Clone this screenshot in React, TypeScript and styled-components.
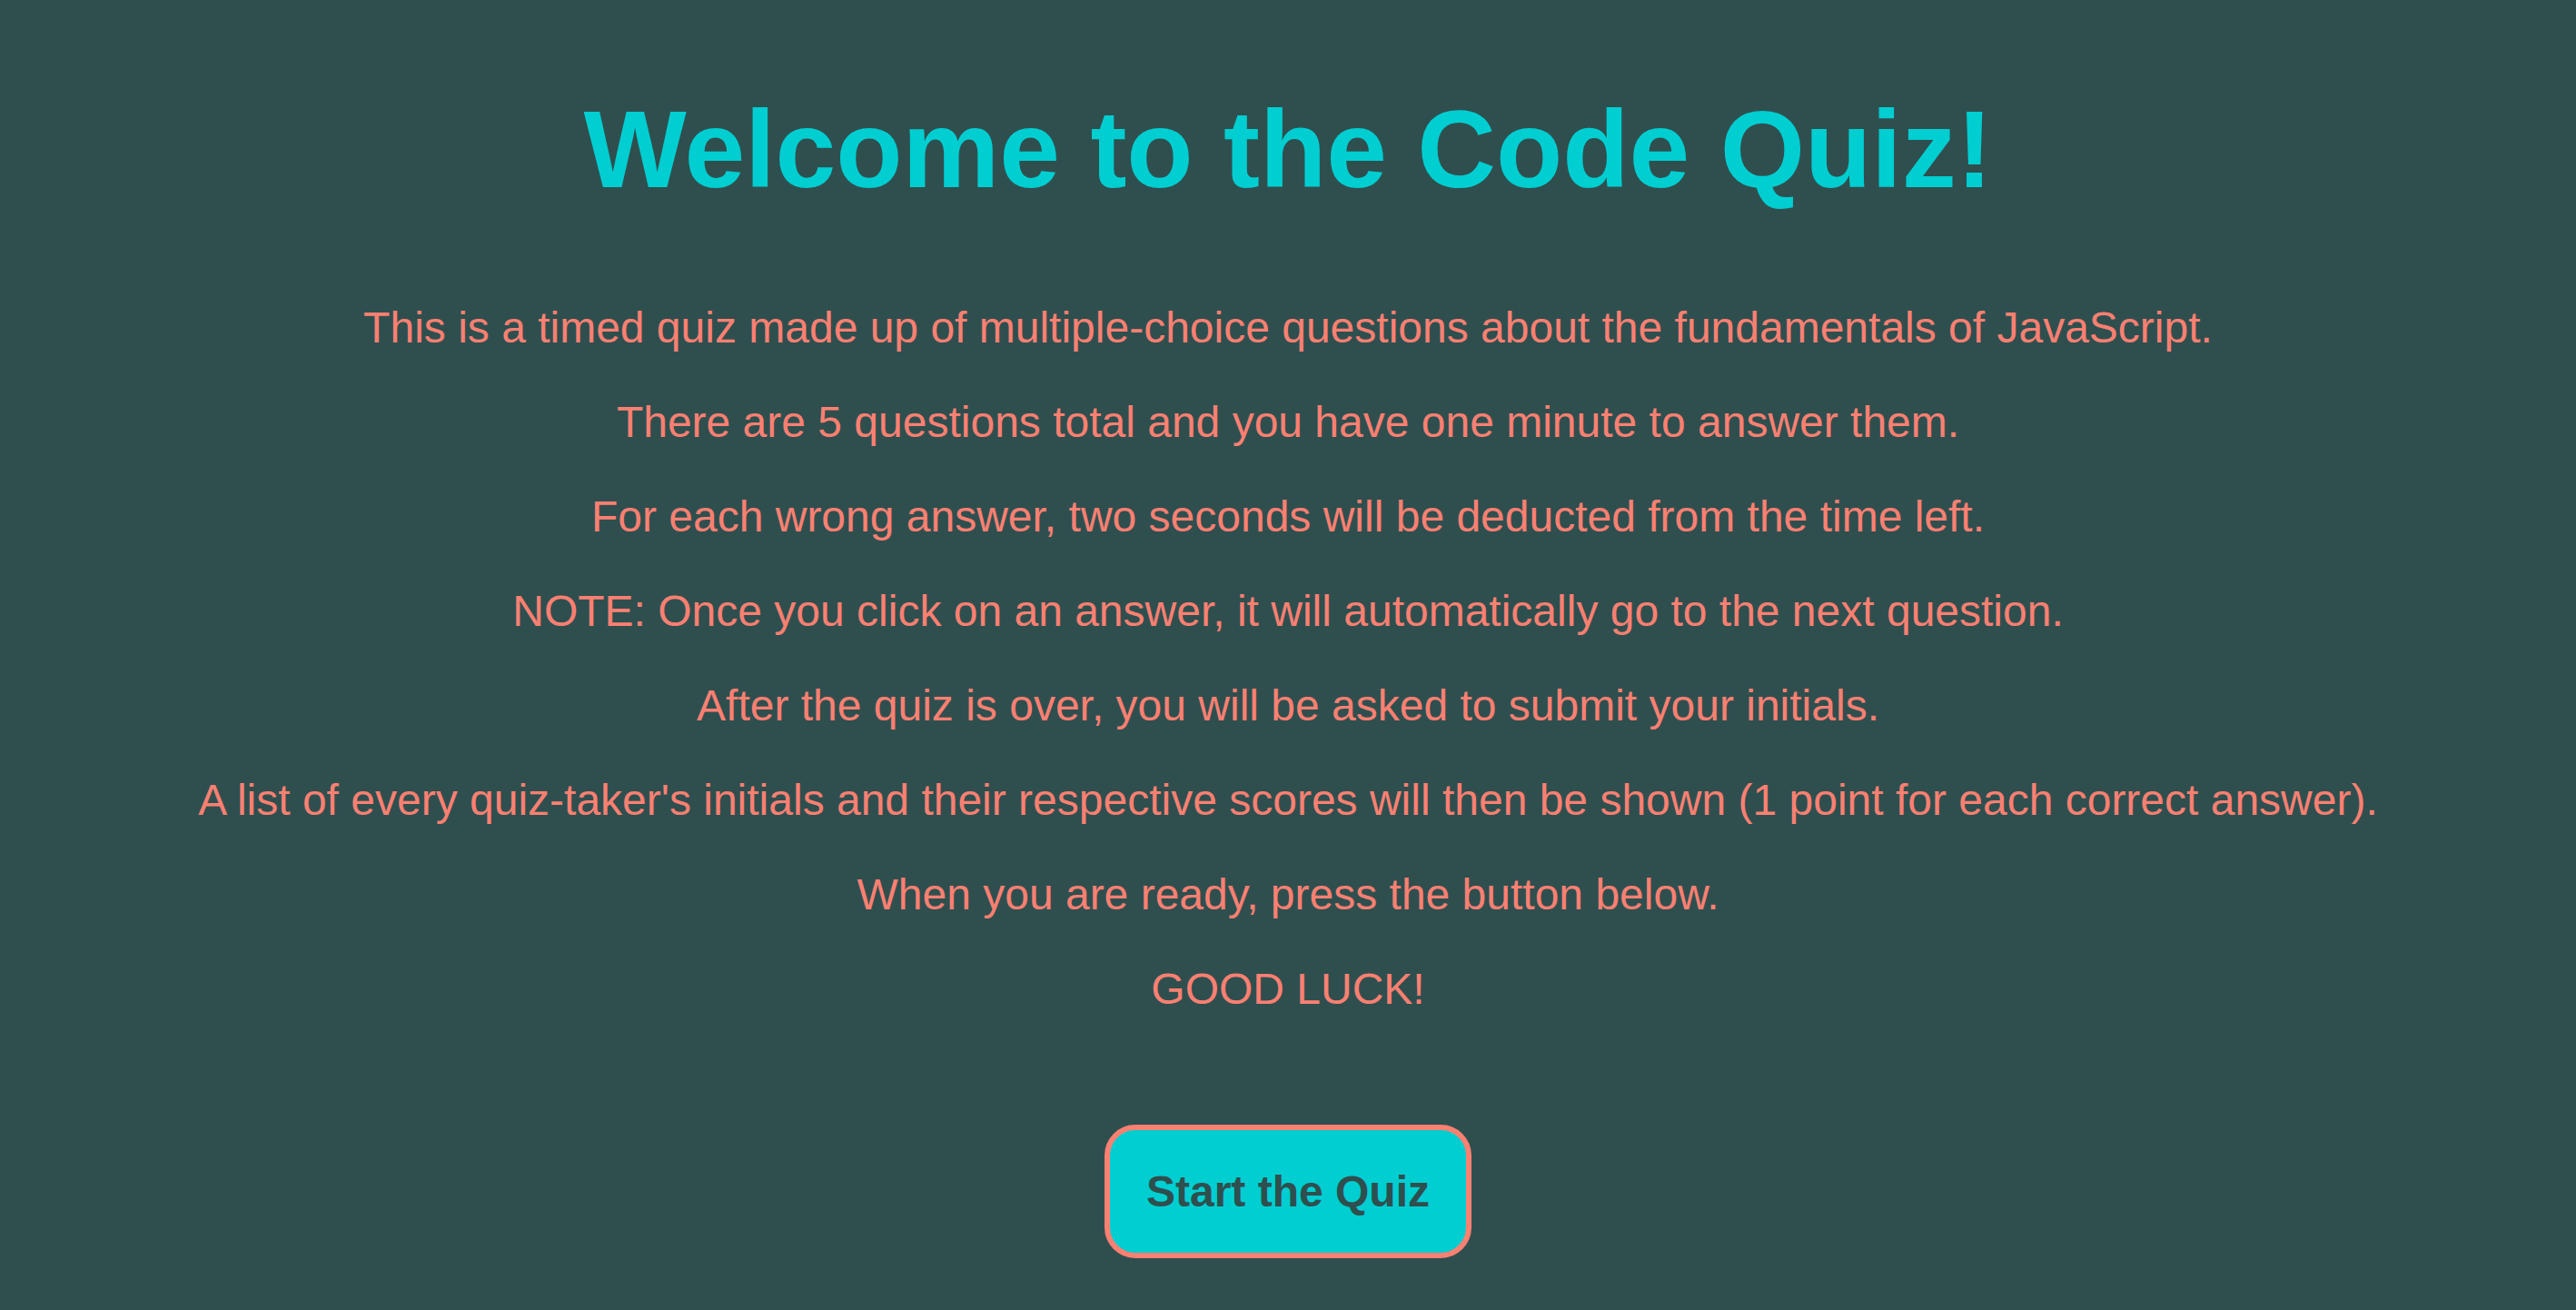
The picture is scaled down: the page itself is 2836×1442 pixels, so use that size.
import React from "react";
import styled, { createGlobalStyle } from "styled-components";

const GlobalStyle = createGlobalStyle`
  html, body {
    margin: 0;
    padding: 0;
    background: #2f4f4f;
  }
  body {
    font-family: "Liberation Sans", Arial, Helvetica, sans-serif;
    min-height: 100vh;
  }
`;

const Page = styled.main`
  display: flex;
  flex-direction: column;
  align-items: center;
  padding: 95px 0 40px;
  background: #2f4f4f;
  min-height: 100vh;
  box-sizing: border-box;
`;

const Title = styled.h1`
  margin: 0 0 100px;
  font-size: 120px;
  line-height: 138px;
  font-weight: 700;
  color: #00ced1;
  text-align: center;
`;

const Intro = styled.section`
  display: flex;
  flex-direction: column;
  align-items: center;
  gap: 48px;
`;

const Line = styled.p`
  margin: 0;
  font-size: 48px;
  line-height: 56px;
  color: #fa8072;
  text-align: center;
`;

const StartButton = styled.button`
  margin-top: 121px;
  padding: 40px;
  border: 6px solid #fa8072;
  border-radius: 34px;
  background: #00ced1;
  color: #2f4f4f;
  font-family: "Liberation Sans", Arial, Helvetica, sans-serif;
  font-size: 48px;
  line-height: 55px;
  font-weight: 700;
  cursor: pointer;
`;

const lines = [
  "This is a timed quiz made up of multiple-choice questions about the fundamentals of JavaScript.",
  "There are 5 questions total and you have one minute to answer them.",
  "For each wrong answer, two seconds will be deducted from the time left.",
  "NOTE: Once you click on an answer, it will automatically go to the next question.",
  "After the quiz is over, you will be asked to submit your initials.",
  "A list of every quiz-taker's initials and their respective scores will then be shown (1 point for each correct answer).",
  "When you are ready, press the button below.",
  "GOOD LUCK!",
];

export default function App() {
  return (
    <>
      <GlobalStyle />
      <Page>
        <Title>Welcome to the Code Quiz!</Title>
        <Intro>
          {lines.map((l) => (
            <Line key={l}>{l}</Line>
          ))}
        </Intro>
        <StartButton>Start the Quiz</StartButton>
      </Page>
    </>
  );
}
